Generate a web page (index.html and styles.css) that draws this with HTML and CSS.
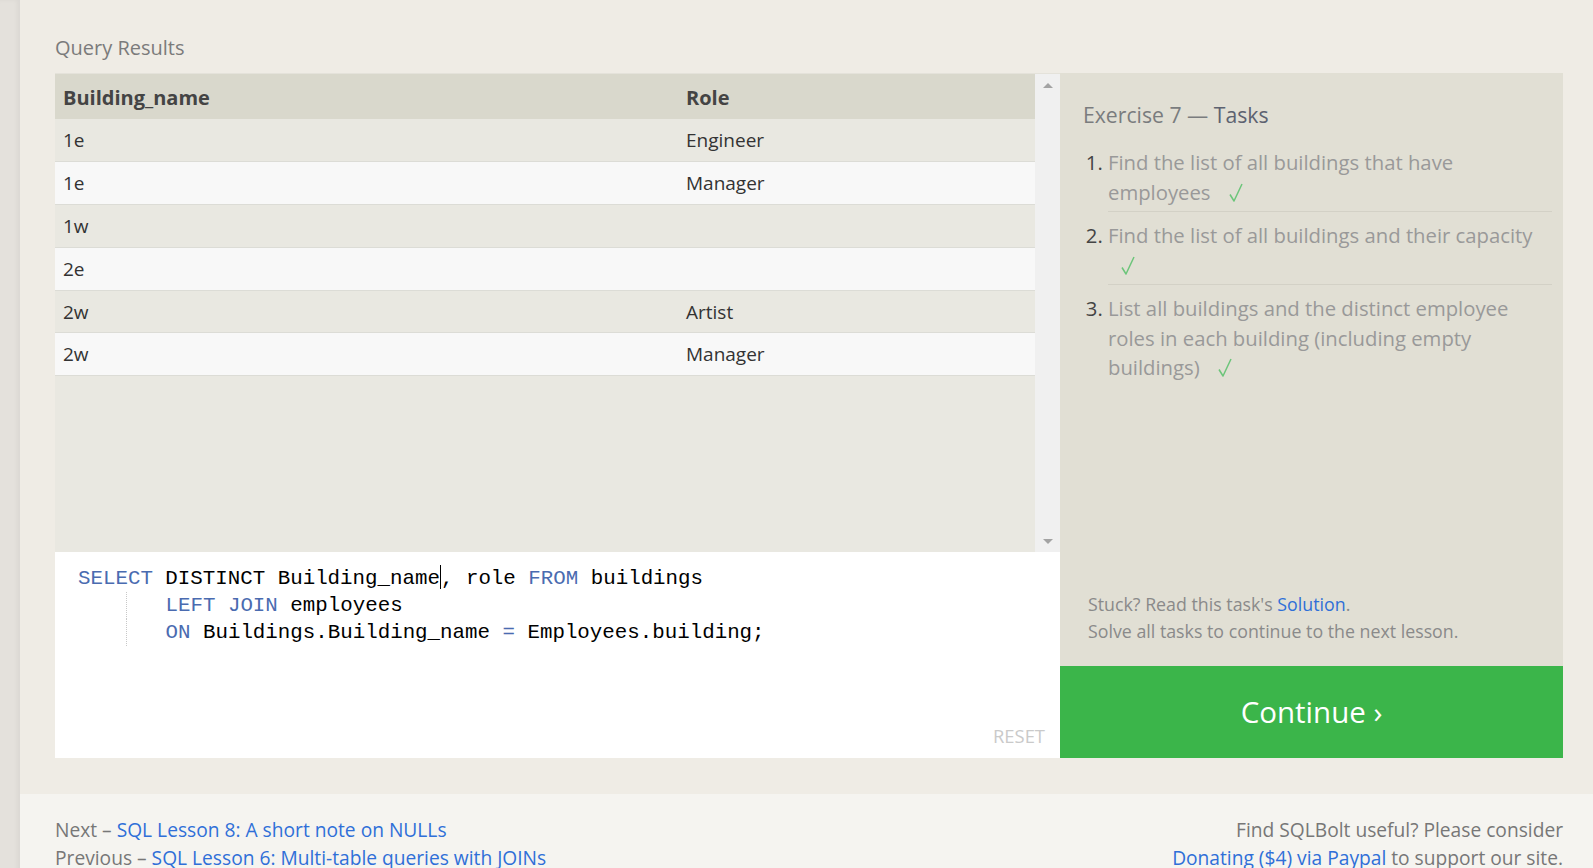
FILE: index.html
```html
<!DOCTYPE html>
<html lang="en">
<head>
<meta charset="utf-8">
<title>SQLBolt - Exercise 7</title>
<link rel="stylesheet" href="styles.css">
</head>
<body>
<div class="page">
  <div class="sidebar"></div>
  <div class="main">
    <section class="exercise">
      <h3 class="results-title">Query Results</h3>
      <div class="workspace">
        <div class="left-col">
          <div class="results">
            <div class="table-area">
              <table class="results-table">
                <thead>
                  <tr><th class="col1">Building_name</th><th>Role</th></tr>
                </thead>
                <tbody>
                  <tr><td>1e</td><td>Engineer</td></tr>
                  <tr><td>1e</td><td>Manager</td></tr>
                  <tr><td>1w</td><td></td></tr>
                  <tr><td>2e</td><td></td></tr>
                  <tr><td>2w</td><td>Artist</td></tr>
                  <tr><td>2w</td><td>Manager</td></tr>
                </tbody>
              </table>
            </div>
            <div class="scrollbar">
              <span class="arrow arrow-up"></span>
              <span class="arrow arrow-down"></span>
            </div>
          </div>
          <div class="editor">
            <div class="code">
              <div class="line"><span class="kw">SELECT</span> DISTINCT Building_name<span class="cursor"></span>, role <span class="kw">FROM</span> buildings</div>
              <div class="line"><span class="indent"><span class="guide"></span></span><span class="kw">LEFT JOIN</span> employees</div>
              <div class="line"><span class="indent"><span class="guide"></span></span><span class="kw">ON</span> Buildings.Building_name <span class="kw">=</span> Employees.building;</div>
            </div>
            <div class="reset">RESET</div>
          </div>
        </div>
        <div class="right-col">
          <div class="tasks">
            <h3 class="tasks-title"><span class="ex">Exercise 7 —</span> Tasks</h3>
            <ol class="task-list">
              <li><div class="task">Find the list of all buildings that have employees <svg class="check" viewBox="0 0 14 19" width="14" height="19" aria-label="done"><path d="M1 11.5 L5 18 L13 1" fill="none" stroke="#6cc57a" stroke-width="1.5" stroke-linejoin="round"/></svg></div></li>
              <li><div class="task">Find the list of all buildings and their capacity <svg class="check" viewBox="0 0 14 19" width="14" height="19" aria-label="done"><path d="M1 11.5 L5 18 L13 1" fill="none" stroke="#6cc57a" stroke-width="1.5" stroke-linejoin="round"/></svg></div></li>
              <li><div class="task last">List all buildings and the distinct employee roles in each building (including empty buildings) <svg class="check" viewBox="0 0 14 19" width="14" height="19" aria-label="done"><path d="M1 11.5 L5 18 L13 1" fill="none" stroke="#6cc57a" stroke-width="1.5" stroke-linejoin="round"/></svg></div></li>
            </ol>
            <div class="stuck">
              <div>Stuck? Read this task's <a href="#">Solution</a>.</div>
              <div>Solve all tasks to continue to the next lesson.</div>
            </div>
          </div>
          <a class="continue" href="#">Continue ›</a>
        </div>
      </div>
    </section>
    <footer class="footer">
      <div class="nav">
        <div>Next – <a href="#">SQL Lesson 8: A short note on NULLs</a></div>
        <div>Previous – <a href="#">SQL Lesson 6: Multi-table queries with JOINs</a></div>
      </div>
      <div class="donate">
        <div>Find SQLBolt useful? Please consider</div>
        <div><a href="#">Donating ($4) via Paypal</a> to support our site.</div>
      </div>
    </footer>
  </div>
</div>
</body>
</html>
```

FILE: styles.css
```css
* { box-sizing: border-box; }
html, body {
  margin: 0;
  padding: 0;
  height: 100%;
}
body {
  font-family: "Open Sans", "Noto Sans", sans-serif;
  background: #efece5;
  color: #555;
  overflow: hidden;
}
a { color: #2f6fd8; text-decoration: none; }

.page {
  display: flex;
  min-height: 100vh;
}
.sidebar {
  width: 20px;
  flex: none;
  background: #e4e1dc;
  box-shadow: inset -3px 0 4px rgba(0,0,0,0.04);
}
.main {
  flex: 1;
  display: flex;
  flex-direction: column;
}

.exercise {
  padding: 0 30px 36px 35px;
  background: #efece5;
}
.results-title {
  margin: 0;
  padding-top: 34px;
  height: 73px;
  font-weight: 400;
  font-size: 20px;
  line-height: 27px;
  color: #7b7b7b;
}

.workspace {
  display: flex;
  height: 685px;
}
.left-col {
  width: 1005px;
  flex: none;
  display: flex;
  flex-direction: column;
}
.results {
  height: 479px;
  flex: none;
  display: flex;
  background: #e9e8e1;
  border-top: 1px solid #e4e2da;
}
.table-area {
  flex: 1;
}
.results-table {
  width: 100%;
  border-collapse: collapse;
  font-size: 19px;
  color: #333;
}
.results-table th {
  text-align: left;
  font-weight: 700;
  font-size: 20px;
  color: #444;
  background: #d9d8cc;
  height: 45px;
  padding: 2px 8px 0;
}
.results-table th.col1 { width: 623px; }
.results-table td {
  height: 42.8px;
  padding: 0 8px;
  border-bottom: 1px solid #dcdcd6;
}
.results-table tbody tr:nth-child(odd) td { background: #e9e8e1; }
.results-table tbody tr:nth-child(even) td { background: #f8f8f8; }

.scrollbar {
  width: 25px;
  flex: none;
  background: #f0f0f0;
  display: flex;
  flex-direction: column;
  justify-content: space-between;
  align-items: center;
  padding: 9px 0 8px;
}
.arrow {
  width: 0;
  height: 0;
  border-left: 5px solid transparent;
  border-right: 5px solid transparent;
}
.arrow-up { border-bottom: 5px solid #a3a3a3; }
.arrow-down { border-top: 5px solid #a3a3a3; }

.editor {
  flex: 1;
  background: #fff;
  display: flex;
  flex-direction: column;
  justify-content: space-between;
  padding: 13px 15px 10px 23px;
}
.code {
  font-family: "Liberation Mono", "DejaVu Sans Mono", monospace;
  font-size: 20.8px;
  line-height: 27px;
  color: #000;
}
.line {
  white-space: pre;
  height: 27px;
}
.kw { color: #4a6bb0; }
.cursor {
  display: inline-block;
  width: 0;
  height: 24px;
  border-left: 1px solid #000;
  vertical-align: -5px;
}
.indent {
  display: inline-block;
  width: 87.5px;
  height: 27px;
  vertical-align: top;
  position: relative;
}
.guide {
  position: absolute;
  left: 48px;
  top: 0;
  height: 27px;
  border-left: 1px dotted #c8c8c8;
}
.reset {
  align-self: flex-end;
  font-size: 18.4px;
  color: #cacaca;
  line-height: 24px;
}

.right-col {
  flex: 1;
  display: flex;
  flex-direction: column;
}
.tasks {
  flex: 1;
  background: #e1dfd4;
  padding: 0 11px 21px 23px;
  display: flex;
  flex-direction: column;
}
.tasks-title {
  margin: 0;
  padding-top: 27px;
  font-weight: 400;
  font-size: 21.2px;
  line-height: 30px;
  color: #5d6270;
}
.tasks-title .ex { color: #7a7c7e; }
.task-list {
  margin: 18px 0 0;
  padding: 0 0 0 25px;
  color: #444;
  font-size: 20.3px;
  line-height: 29.5px;
}
.task {
  color: #999;
  border-bottom: 1px solid #d3d1c6;
  padding-bottom: 4px;
  margin-bottom: 9px;
}
.task.last { border-bottom: none; }
.check {
  display: inline-block;
  margin-left: 13px;
  vertical-align: -2px;
}
.stuck {
  margin-top: auto;
  padding-left: 5px;
  font-size: 17.8px;
  line-height: 27px;
  color: #8a8a8a;
}
.continue {
  height: 92px;
  flex: none;
  background: #3bb54a;
  color: #fff;
  display: flex;
  align-items: center;
  justify-content: center;
  font-size: 29.5px;
  padding-bottom: 2px;
}

.footer {
  flex: 1;
  background: #f5f4f0;
  display: flex;
  justify-content: space-between;
  padding: 22px 30px 0 35px;
  font-size: 19.2px;
  line-height: 28px;
  color: #777;
}
.donate { text-align: right; }
```
